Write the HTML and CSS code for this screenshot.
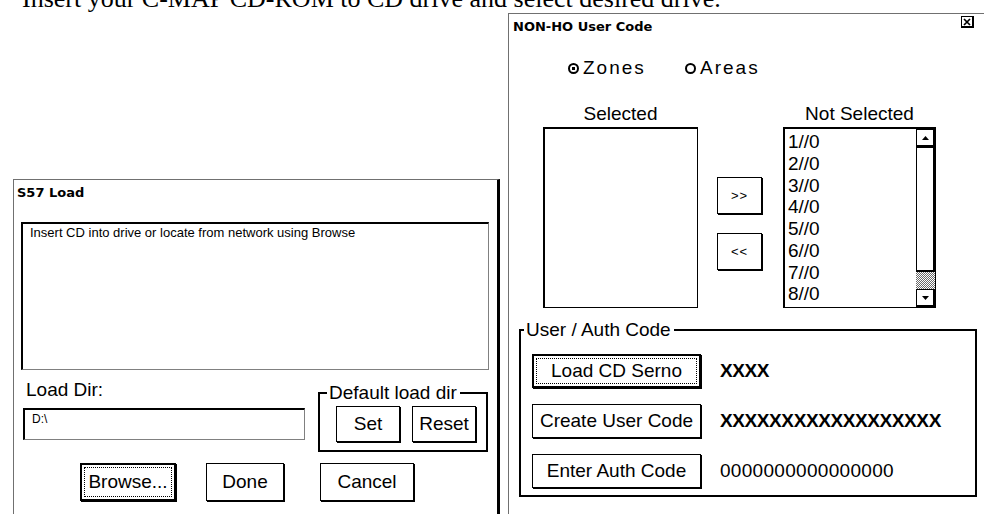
FILE: index.html
```html
<!DOCTYPE html>
<html lang="en">
<head>
    <meta charset="UTF-8">
    <meta name="viewport" content="width=device-width, initial-scale=1.0">
    <title>C-MAP Chart Load</title>
    <link rel="stylesheet" href="styles.css">
</head>
<body>
<div class="page">

    <p class="instruction">Insert your C-MAP CD-ROM to CD drive and select desired drive.</p>

    <div class="desktop">

        <!-- S57 Load dialog -->
        <div class="window s57">
            <div class="title-bar">
                <span class="title">S57 Load</span>
            </div>
            <div class="s57-body">
                <div class="info-box">Insert CD into drive or locate from network using Browse</div>

                <div class="dir-row">
                    <div class="dir-col">
                        <div class="label">Load Dir:</div>
                        <div class="text-input">D:\</div>
                    </div>
                    <fieldset class="group default-dir">
                        <legend>Default load dir</legend>
                        <div class="btn-pair">
                            <button class="btn btn-small">Set</button>
                            <button class="btn btn-small">Reset</button>
                        </div>
                    </fieldset>
                </div>

                <div class="action-row">
                    <button class="btn btn-default btn-browse"><span class="focus">Browse...</span></button>
                    <button class="btn btn-done">Done</button>
                    <button class="btn btn-cancel">Cancel</button>
                </div>
            </div>
        </div>

        <!-- NON-HO User Code dialog -->
        <div class="window nonho">
            <div class="title-bar">
                <span class="title">NON-HO User Code</span>
                <span class="close">
                    <svg width="8" height="8" viewBox="0 0 8 8"><path d="M1 1L7 7M7 1L1 7" stroke="#000" stroke-width="1.7"/></svg>
                </span>
            </div>

            <div class="radio-row">
                <span class="radio radio-zones"><span class="radio-mark checked"></span>Zones</span>
                <span class="radio"><span class="radio-mark"></span>Areas</span>
            </div>

            <div class="lists-row">
                <div class="list-col col-selected">
                    <div class="list-label">Selected</div>
                    <div class="listbox"></div>
                </div>

                <div class="mover">
                    <button class="btn btn-move">&gt;&gt;</button>
                    <button class="btn btn-move">&lt;&lt;</button>
                </div>

                <div class="list-col col-available">
                    <div class="list-label">Not Selected</div>
                    <div class="listbox listbox-scroll">
                        <div class="items">
                            <div>1//0</div>
                            <div>2//0</div>
                            <div>3//0</div>
                            <div>4//0</div>
                            <div>5//0</div>
                            <div>6//0</div>
                            <div>7//0</div>
                            <div>8//0</div>
                        </div>
                        <div class="scrollbar">
                            <div class="sb-btn">
                                <svg width="7" height="4" viewBox="0 0 7 4"><polygon points="0,4 7,4 3.5,0"/></svg>
                            </div>
                            <div class="sb-thumb"></div>
                            <div class="sb-track"></div>
                            <div class="sb-btn">
                                <svg width="7" height="4" viewBox="0 0 7 4"><polygon points="0,0 7,0 3.5,4"/></svg>
                            </div>
                        </div>
                    </div>
                </div>
            </div>

            <fieldset class="group auth">
                <legend>User / Auth Code</legend>
                <div class="code-rows">
                    <div class="code-row">
                        <button class="btn btn-default btn-code"><span class="focus">Load CD Serno</span></button>
                        <span class="code-value masked">XXXX</span>
                    </div>
                    <div class="code-row">
                        <button class="btn btn-code">Create User Code</button>
                        <span class="code-value masked">XXXXXXXXXXXXXXXXXX</span>
                    </div>
                    <div class="code-row">
                        <button class="btn btn-code">Enter Auth Code</button>
                        <span class="code-value">0000000000000000</span>
                    </div>
                </div>
            </fieldset>
        </div>

    </div>
</div>
</body>
</html>
```

FILE: styles.css
```css
* {
    box-sizing: border-box;
}

body {
    margin: 0;
    background-color: #fff;
    color: #000;
    font-family: "Liberation Sans", Arial, sans-serif;
    font-size: 19px;
}

.page {
    width: 984px;
    height: 514px;
    overflow: hidden;
}

.instruction {
    margin: -14px 0 0 0;
    padding-left: 22px;
    height: 26px;
    font-family: "Liberation Serif", "Times New Roman", serif;
    font-size: 26px;
    line-height: 26px;
    white-space: nowrap;
}

.desktop {
    display: flex;
    align-items: flex-start;
    gap: 8px;
    margin-top: 1px;
    padding-left: 13px;
}

/* windows */
.window {
    flex: none;
    background-color: #fff;
    border-top: 1px solid #707070;
    border-left: 1px solid #707070;
}

.s57 {
    width: 487px;
    height: 335px;
    margin-top: 166px;
    border-right: 3px solid #000;
}

.nonho {
    width: 476px;
    height: 501px;
}

.title-bar {
    display: flex;
    align-items: flex-start;
    padding: 2px 10px 0 3px;
}

.title {
    padding-top: 3px;
    font-family: "DejaVu Sans", sans-serif;
    font-weight: bold;
    font-size: 13px;
    line-height: 16px;
}

.nonho .title-bar {
    padding-left: 4px;
}

.close {
    margin-left: auto;
    width: 13px;
    height: 12px;
    border: 1px solid #000;
    border-right-width: 2px;
    border-bottom-width: 2px;
    display: flex;
    align-items: center;
    justify-content: center;
}

/* buttons */
.btn {
    margin: 0;
    padding: 0;
    font-family: inherit;
    font-size: 19px;
    line-height: 22px;
    color: #000;
    background-color: #fff;
    border: 1px solid #000;
    border-radius: 0;
    box-shadow: 1px 1px 0 #000;
}

.btn-default {
    display: flex;
    align-items: stretch;
    padding: 2px;
    border-width: 2px;
}

.btn-default .focus {
    flex: 1;
    display: flex;
    align-items: center;
    justify-content: center;
    border: 1px dotted #000;
}

/* S57 load */
.s57-body {
    padding: 0 8px 0 7px;
}

.info-box {
    margin-top: 21px;
    height: 148px;
    padding: 1px 7px;
    border-style: solid;
    border-width: 2px 1px 1px 2px;
    border-color: #000 #808080 #808080 #000;
    font-size: 13px;
    line-height: 15px;
}

.dir-row {
    display: flex;
    justify-content: space-between;
    align-items: flex-start;
    margin-top: 9px;
}

.dir-col {
    width: 284px;
    padding-left: 2px;
}

.label {
    padding-left: 3px;
    line-height: 22px;
}

.text-input {
    margin-top: 7px;
    width: 282px;
    height: 32px;
    padding: 2px 7px;
    border-style: solid;
    border-width: 2px 1px 1px 2px;
    border-color: #000 #808080 #808080 #000;
    font-size: 12px;
    line-height: 14px;
}

.group {
    margin: 0;
    min-width: 0;
    border: 2px solid #000;
}

.group legend {
    padding: 0 3px 0 2px;
    font-size: 19px;
    line-height: 22px;
}

.default-dir {
    width: 170px;
    margin: 3px 1px 0 0;
    padding: 2px 8px 8px 16px;
}

.default-dir legend {
    margin-left: -9px;
}

.btn-pair {
    display: flex;
    gap: 12px;
}

.btn-small {
    width: 64px;
    height: 36px;
}

.action-row {
    display: flex;
    margin-top: 11px;
    padding-left: 59px;
}

.action-row .btn {
    height: 38px;
}

.btn-browse {
    width: 96px;
}

.btn-done {
    width: 78px;
    margin-left: 30px;
}

.btn-cancel {
    width: 94px;
    margin-left: 36px;
}

/* NON-HO user code */
.radio-row {
    display: flex;
    margin-top: 22px;
    padding-left: 59px;
    line-height: 22px;
}

.radio {
    display: inline-flex;
    align-items: center;
    letter-spacing: 2px;
}

.radio-zones {
    width: 117px;
}

.radio-mark {
    width: 11px;
    height: 11px;
    margin-right: 4px;
    border: 2px solid #000;
    border-radius: 50%;
}

.radio-mark.checked {
    background: radial-gradient(circle, #000 0 1.5px, transparent 2px);
}

.lists-row {
    display: flex;
    margin-top: 24px;
    padding-left: 34px;
}

.list-label {
    text-align: center;
    line-height: 22px;
    margin-bottom: 2px;
}

.col-selected {
    width: 155px;
}

.col-available {
    width: 153px;
}

.listbox {
    height: 181px;
    border-style: solid;
    border-width: 2px 1px 1px 2px;
    border-color: #000;
}

.listbox-scroll {
    display: flex;
}

.items {
    flex: 1;
    padding: 2px 0 0 3px;
    line-height: 21.75px;
}

.scrollbar {
    width: 19px;
    display: flex;
    flex-direction: column;
}

.sb-btn {
    height: 18px;
    border: 1px solid #000;
    border-right-width: 2px;
    border-bottom-width: 2px;
    display: flex;
    align-items: center;
    justify-content: center;
}

.sb-thumb {
    height: 125px;
    border: 1px solid #000;
    border-right-width: 2px;
    border-bottom-width: 2px;
}

.sb-track {
    height: 17px;
    background: repeating-conic-gradient(#6a6a6a 0 25%, #fff 0 50%) 0 0 / 2px 2px;
}

.mover {
    width: 46px;
    margin: 0 20px 0 19px;
    padding-top: 74px;
    display: flex;
    flex-direction: column;
    gap: 19px;
}

.btn-move {
    width: 45px;
    height: 37px;
    font-size: 13px;
    letter-spacing: 1px;
}

.auth {
    width: 458px;
    margin: 11px 0 0 10px;
    padding: 13px 10px 7px 11px;
}

.auth legend {
    margin-left: -8px;
}

.code-rows {
    display: flex;
    flex-direction: column;
    gap: 16px;
}

.code-row {
    display: flex;
    align-items: center;
    gap: 19px;
}

.btn-code {
    width: 169px;
    height: 34px;
}

.code-value {
    letter-spacing: 0.3px;
}

.code-value.masked {
    font-weight: bold;
    letter-spacing: -0.4px;
}
```
